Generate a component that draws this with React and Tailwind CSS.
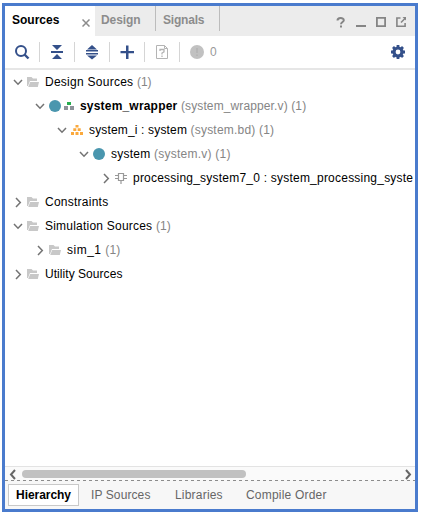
const ink = '#34508a';

function Chevron({ open }) {
  return (
    <svg className="h-3 w-3 shrink-0" viewBox="0 0 12 12" fill="none" stroke="#737373" strokeWidth="1.5">
      <path d={open ? 'M2 4l4 4.2L10 4' : 'M4 2l4.3 4.5L4 11'} />
    </svg>
  );
}

function Folder() {
  return (
    <svg className="h-3 w-3 shrink-0" viewBox="0 0 12 12" fill="#c8c8c8">
      <path d="M0 1h4.500L6 2.500h4V5H3L1 10H0z" />
      <path d="M3.200 6H12l-1.200 5H1.200z" />
    </svg>
  );
}

function Disc() {
  return <span className="h-3 w-3 shrink-0 rounded-full bg-[#4a96ae]" />;
}

function Modules() {
  return (
    <svg className="ml-[3px] h-3 w-[10px] shrink-0" viewBox="0 0 10 12" shapeRendering="crispEdges">
      <path fill="#27ae50" d="M3 2h4v3H3z" />
      <path fill="#8d9299" d="M0 6h4v4H0zM6 6h4v4H6z" />
    </svg>
  );
}

function BlockDesign() {
  return (
    <svg className="h-3 w-3 shrink-0" viewBox="0 0 12 12" fill="#fba93c">
      <path d="M4.500 1h3v2.500h-3zM2.300 4.300h3V7h-3zM6.700 4.300h3V7h-3zM0 8h3v3H0zM4.500 8h3v3h-3zM9 8h3v3H9z" />
    </svg>
  );
}

function Chip() {
  return (
    <svg className="h-3 w-3 shrink-0" viewBox="0 0 12 12" fill="none" stroke="#999" strokeWidth="1.200">
      <path d="M3.500 1.500h5v7h-5zM0 3.500h3M0 6.500h3M9 3.500h3M9 6.500h3M6 9v3" />
    </svg>
  );
}

function Row({ indent, open, icon, children }) {
  return (
    <div className={`flex h-6 shrink-0 items-center whitespace-pre ${indent}`}>
      <Chevron open={open} />
      <span className="mr-1.5 ml-[3px] flex items-center">{icon}</span>
      {children}
    </div>
  );
}

function Muted({ children, className = '' }) {
  return <span className={`text-[#858585] ${className}`}>{children}</span>;
}

function Divider() {
  return <span className="h-5 w-px shrink-0 bg-[#d5d5d5]" />;
}

function Toolbar() {
  return (
    <div className="flex h-[34px] shrink-0 items-center border-b-2 border-[#e6e6e6]">
      <svg className="ml-[9px] h-4 w-4" viewBox="0 0 16 16" fill="none" stroke={ink} strokeWidth="2">
        <circle cx="7" cy="7" r="5" />
        <path d="M10.500 10.500l4 4" strokeWidth="2.400" />
      </svg>
      <span className="w-[9px]" />
      <Divider />
      <svg className="mx-[9px] h-4 w-4" viewBox="0 0 16 16" fill={ink}>
        <path d="M3 1h10L8 6zM2 7h12v2H2zM3 15h10L8 10z" />
      </svg>
      <Divider />
      <svg className="mx-[9px] h-4 w-4" viewBox="0 0 16 16" fill={ink}>
        <path d="M8 1l5 4.500H3zM2 6h12v1.600H2zM2 9h12v1.600H2zM8 15.500l5-4H3z" />
      </svg>
      <Divider />
      <svg className="mx-[9px] h-4 w-4" viewBox="0 0 16 16" fill={ink}>
        <path d="M7 1.500h2.500v5.500H15v2.300H9.500V15H7V9.300H1.500V7H7z" />
      </svg>
      <Divider />
      <svg className="ml-[11px] h-[14px] w-3" viewBox="0 0 12 14" fill="none" stroke="#b4b4b4">
        <path d="M.5.500h8l3 3v10H.5zM8.500.500v3h3" />
        <path d="M4 6V4.500h4v2.300L6 8v1.500M6 10.500V12" strokeWidth="1.300" />
      </svg>
      <span className="w-[11px]" />
      <Divider />
      <svg className="ml-2.5 h-[14px] w-[14px]" viewBox="0 0 14 14">
        <circle cx="7" cy="7" r="7" fill="#c1c1c1" />
        <path d="M7 3v5M7 9.500v1.500" stroke="#b3b3b3" strokeWidth="1.500" />
      </svg>
      <span className="ml-1.5 text-[#999]">0</span>
      <svg className="mr-2.5 ml-auto h-[14px] w-[14px]" viewBox="0 0 14 14" fill="none" stroke={ink}>
        <circle cx="7" cy="7" r="4" strokeWidth="3.200" />
        <path d="M7 0v2M7 12v2M0 7h2M12 7h2M2 2l1.500 1.500M10.500 10.500L12 12M2 12l1.500-1.500M10.500 3.500L12 2" strokeWidth="2.800" />
      </svg>
    </div>
  );
}

function TabBar() {
  return (
    <div className="flex h-[30px] shrink-0 bg-[#ececec] font-bold text-[#8c8c8c]">
      <div className="flex w-[90px] items-center bg-white pr-[5px] pb-0.5 pl-[7px] text-black">
        <span>Sources</span>
        <svg className="mt-1.5 ml-auto h-2 w-2" viewBox="0 0 8 8" stroke="#8c8c8c" strokeWidth="1.500">
          <path d="M.5.500l7 7M7.500.500l-7 7" />
        </svg>
      </div>
      <div className="flex h-[25px] w-[61px] items-center border-r border-[#bcbcbc] pt-[3px] pl-1.5">
        <span className="tracking-[-0.1px]">Design</span>
      </div>
      <div className="flex h-[25px] w-16 items-center border-r border-[#bcbcbc] pt-[3px] pl-[7px]">
        <span className="tracking-[-0.2px]">Signals</span>
      </div>
      <svg className="mt-[11px] mr-2 ml-auto h-3 w-[71px]" viewBox="0 0 71 12" fill="none" stroke="#858585" strokeWidth="1.800">
        <path d="M1.500 3.500C1.500.400 7.800.300 7.800 3.200C7.800 5 5 5 5 7.300M5 8.500v2" strokeWidth="2" />
        <path d="M20 9h10M40.900 .9h8.200v8.200h-8.200z" />
        <path d="M64.500 1h-3.600v8.200h8.200V6M65 5.500l4.200-4.200" strokeWidth="1.600" />
        <path d="M66.500 0H70v3.500z" fill="#858585" stroke="none" />
      </svg>
    </div>
  );
}

export default function App() {
  return (
    <div className="h-[515px] w-[421px] bg-white pt-[3px] pl-0.5 font-['Liberation_Sans',Arial,sans-serif] text-[12px] leading-4 text-black">
      <div className="flex h-[509px] w-[416px] flex-col overflow-hidden border-[3px] border-[#4a7bcd] bg-white">
        <TabBar />
        <Toolbar />
        <div className="flex min-h-0 flex-1 flex-col overflow-hidden">
          <Row indent="pl-[7px]" open icon={<Folder />}>
            <span className="tracking-[0.26px]">Design Sources </span><Muted>(1)</Muted>
          </Row>
          <Row indent="pl-[29px]" open icon={<><Disc /><Modules /></>}>
            <b className="tracking-[0.19px]">system_wrapper </b><Muted className="tracking-[0.12px]">(system_wrapper.v) (1)</Muted>
          </Row>
          <Row indent="pl-[51px]" open icon={<BlockDesign />}>
            <span className="tracking-[0.16px]">system_i : system </span><Muted className="tracking-[0.2px]">(system.bd) (1)</Muted>
          </Row>
          <Row indent="pl-[73px]" open icon={<Disc />}>
            <span className="tracking-[0.25px]">system </span><Muted className="tracking-[0.23px]">(system.v) (1)</Muted>
          </Row>
          <Row indent="pl-[95px]" icon={<Chip />}>
            <span className="tracking-[0.22px]">processing_system7_0 : system_processing_syste</span>
          </Row>
          <Row indent="pl-[7px]" icon={<Folder />}><span className="tracking-[0.25px]">Constraints</span></Row>
          <Row indent="pl-[7px]" open icon={<Folder />}>
            <span className="tracking-[0.22px]">Simulation Sources </span><Muted className="tracking-[0.1px]">(1)</Muted>
          </Row>
          <Row indent="pl-[29px]" icon={<Folder />}>
            <span className="tracking-[0.5px]">sim_1 </span><Muted className="tracking-[0.1px]">(1)</Muted>
          </Row>
          <Row indent="pl-[7px]" icon={<Folder />}><span className="tracking-[0.05px]">Utility Sources</span></Row>
        </div>
        <div className="flex h-[14px] shrink-0 items-center border-t border-[#e3e3e3] bg-[#fafafa] px-[3px]">
          <svg className="h-3 w-3" viewBox="0 0 12 12" fill="none" stroke="#666" strokeWidth="2"><path d="M7 2L3 6.500 7 11" /></svg>
          <span className="ml-0.5 h-2 w-[224px] rounded-full bg-[#c1c1c1]" />
          <svg className="ml-auto h-3 w-3" viewBox="0 0 12 12" fill="none" stroke="#666" strokeWidth="2"><path d="M6 2l4 4.500L6 11" /></svg>
        </div>
        <div className="h-px shrink-0 bg-[repeating-linear-gradient(90deg,#8c8c8c_0px,#8c8c8c_3px,#f7f7f7_3px,#f7f7f7_6px)]" />
        <div className="flex h-7 shrink-0 items-center bg-[#f7f7f7] pl-[3px] text-[#666]">
          <div className="flex h-[22px] w-[71px] items-center justify-center border border-[#c9c9c9] bg-white font-bold text-black">
            <span className="tracking-[-0.05px]">Hierarchy</span>
          </div>
          <span className="ml-3 w-[84px] tracking-[0.1px]">IP Sources</span>
          <span className="w-[71px] tracking-[0.2px]">Libraries</span>
          <span className="tracking-[0.2px]">Compile Order</span>
        </div>
      </div>
    </div>
  );
}
